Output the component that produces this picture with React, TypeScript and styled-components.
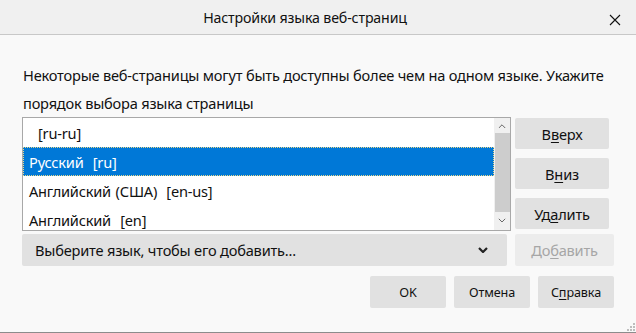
import React from "react";
import styled, { createGlobalStyle } from "styled-components";

const GlobalStyle = createGlobalStyle`
  html, body {
    margin: 0;
    padding: 0;
    background: #f9f9f9;
  }
  body {
    font-family: "Noto Sans", "Open Sans", sans-serif;
    color: #000;
  }
`;

interface Lang {
  name: string;
  code: string;
  selected?: boolean;
}

const languages: Lang[] = [
  { name: "", code: "ru-ru" },
  { name: "Русский", code: "ru", selected: true },
  { name: "Английский (США)", code: "en-us" },
  { name: "Английский", code: "en" },
];

const Chevron: React.FC<{ up?: boolean; size?: number; weight?: number; color?: string }> = ({
  up,
  size = 8,
  weight = 1.2,
  color = "#606060",
}) => (
  <svg width={size} height={size * 0.6} viewBox="0 0 10 6">
    <path
      d={up ? "M1 5 L5 1 L9 5" : "M1 1 L5 5 L9 1"}
      fill="none"
      stroke={color}
      strokeWidth={weight}
    />
  </svg>
);

const App: React.FC = () => {
  return (
    <Window>
      <GlobalStyle />
      <TitleBar>
        <Title>Настройки языка веб-страниц</Title>
        <CloseButton>
          <svg width="12" height="12" viewBox="0 0 12 12">
            <path d="M1 1 L11 11 M11 1 L1 11" stroke="#111" strokeWidth="1.1" />
          </svg>
        </CloseButton>
      </TitleBar>
      <Body>
        <Description>
          Некоторые веб-страницы могут быть доступны более чем на одном языке. Укажите
          <br />
          порядок выбора языка страницы
        </Description>
        <Grid>
          <ListBox>
            <Rows>
              {languages.map((l) => (
                <Row key={l.code} $selected={l.selected} $indent={!l.name}>
                  {l.name ? `${l.name}  [${l.code}]` : `[${l.code}]`}
                </Row>
              ))}
            </Rows>
            <ScrollBar>
              <ScrollArrow>
                <Chevron up />
              </ScrollArrow>
              <Thumb />
              <ScrollArrow>
                <Chevron />
              </ScrollArrow>
            </ScrollBar>
          </ListBox>
          <SideButtons>
            <SideButton>
              В<u>в</u>ерх
            </SideButton>
            <SideButton>
              В<u>н</u>из
            </SideButton>
            <SideButton>
              Уд<u>а</u>лить
            </SideButton>
          </SideButtons>
          <Dropdown>
            <span>Выберите язык, чтобы его добавить...</span>
            <Chevron size={10} weight={2.2} color="#222" />
          </Dropdown>
          <AddButton disabled>
            До<u>б</u>авить
          </AddButton>
        </Grid>
        <Footer>
          <DialogButton>OK</DialogButton>
          <DialogButton>Отмена</DialogButton>
          <DialogButton>
            С<u>п</u>равка
          </DialogButton>
        </Footer>
      </Body>
      <Grip width="8" height="8" viewBox="0 0 8 8">
        <rect x="6" y="0" width="2" height="2" fill="#bdbdbd" />
        <rect x="3" y="3" width="2" height="2" fill="#bdbdbd" />
        <rect x="6" y="3" width="2" height="2" fill="#bdbdbd" />
        <rect x="0" y="6" width="2" height="2" fill="#bdbdbd" />
        <rect x="3" y="6" width="2" height="2" fill="#bdbdbd" />
        <rect x="6" y="6" width="2" height="2" fill="#bdbdbd" />
      </Grip>
    </Window>
  );
};

export default App;

const Window = styled.div`
  position: relative;
  width: 636px;
  height: 333px;
  box-sizing: border-box;
  background: #f9f9f9;
  border-bottom: 1px solid #8c8c8c;
  display: flex;
  flex-direction: column;
  overflow: hidden;
`;

const TitleBar = styled.div`
  height: 34px;
  background: #f0f0f0;
  border-bottom: 1px solid #c8c8c8;
  display: flex;
  align-items: center;
  padding: 0 44px 0 18px;
  position: relative;
`;

const Title = styled.div`
  flex: 1;
  text-align: center;
  font-size: 14.2px;
  letter-spacing: -0.15px;
  color: #111;
`;

const CloseButton = styled.div`
  position: absolute;
  right: 15px;
  top: 14px;
  width: 12px;
  height: 12px;
  display: flex;
`;

const Body = styled.div`
  padding: 26px 22px 0 22px;
  display: flex;
  flex-direction: column;
`;

const Description = styled.div`
  font-size: 14.6px;
  letter-spacing: -0.2px;
  line-height: 28px;
  padding-left: 1px;
  color: #111;
  white-space: nowrap;
`;

const Grid = styled.div`
  display: grid;
  grid-template-columns: 489px 99px;
  column-gap: 4px;
  row-gap: 3px;
`;

const ListBox = styled.div`
  height: 114px;
  box-sizing: border-box;
  border: 1px solid #a8a8a8;
  background: #fff;
  display: flex;
  overflow: hidden;
`;

const Rows = styled.div`
  flex: 1;
  display: flex;
  flex-direction: column;
`;

const Row = styled.div<{ $selected?: boolean; $indent?: boolean }>`
  height: 29px;
  flex-shrink: 0;
  box-sizing: border-box;
  display: flex;
  align-items: center;
  padding-left: ${(p) => (p.$indent ? "14px" : "5px")};
  font-size: 14.6px;
  letter-spacing: -0.2px;
  word-spacing: 1px;
  white-space: pre;
  color: ${(p) => (p.$selected ? "#fff" : "#111")};
  background: ${(p) => (p.$selected ? "#0078d7" : "transparent")};
  border: 1px dotted ${(p) => (p.$selected ? "#e8d88a" : "transparent")};
`;

const ScrollBar = styled.div`
  width: 16px;
  background: #f0f0f0;
  display: flex;
  flex-direction: column;
  align-items: center;
`;

const ScrollArrow = styled.div`
  height: 16px;
  width: 16px;
  display: flex;
  align-items: center;
  justify-content: center;
`;

const Thumb = styled.div`
  width: 15px;
  height: 79px;
  background: #cdcdcd;
  margin-top: -1px;
`;

const SideButtons = styled.div`
  display: flex;
  flex-direction: column;
  gap: 9px;
  padding-top: 1px;
`;

const BaseButton = styled.button`
  font-family: "Noto Sans", "Open Sans", sans-serif;
  font-size: 14.6px;
  letter-spacing: -0.2px;
  color: #111;
  background: #e1e1e1;
  border: none;
  border-radius: 2px;
  padding: 0;
  height: 31px;
  box-sizing: border-box;
  display: flex;
  align-items: center;
  justify-content: center;
  u {
    text-underline-offset: 2px;
  }
`;

const SideButton = styled(BaseButton)`
  width: 94px;
`;

const AddButton = styled(BaseButton)`
  width: 99px;
  height: 32px;
  background: #ececec;
  color: #a6a6a6;
`;

const Dropdown = styled.div`
  width: 485px;
  height: 32px;
  box-sizing: border-box;
  background: #e1e1e1;
  border-radius: 2px;
  display: flex;
  align-items: center;
  justify-content: space-between;
  padding: 0 19px 0 13px;
  font-size: 14.6px;
  letter-spacing: -0.2px;
  color: #111;
`;

const Footer = styled.div`
  display: flex;
  justify-content: flex-end;
  gap: 8px;
  margin-top: 10px;
`;

const DialogButton = styled(BaseButton)`
  width: 76px;
  height: 32px;
  font-size: 12.6px;
  letter-spacing: -0.1px;
`;

const Grip = styled.svg`
  position: absolute;
  right: 1px;
  bottom: 1px;
`;
